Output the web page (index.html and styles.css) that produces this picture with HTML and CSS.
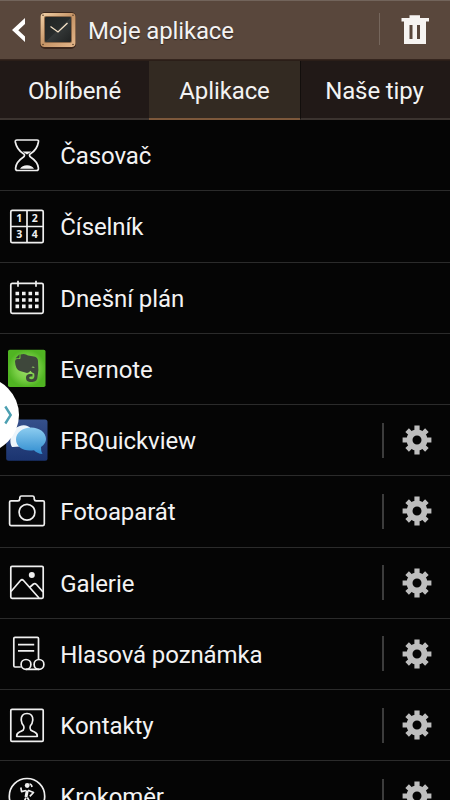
FILE: index.html
```
<!DOCTYPE html>
<html lang="cs">
<head>
<meta charset="utf-8">
<title>Moje aplikace</title>
<link rel="stylesheet" href="styles.css">
</head>
<body>
<svg class="defs" width="0" height="0" aria-hidden="true">
  <defs>
    <linearGradient id="gold" x1="0" y1="0" x2="1" y2="1"><stop offset="0" stop-color="#f1d1a8"/><stop offset=".5" stop-color="#c59466"/><stop offset="1" stop-color="#e5b78b"/></linearGradient>
    <linearGradient id="face" x1="0" y1="0" x2="1" y2="1"><stop offset="0" stop-color="#202424"/><stop offset=".5" stop-color="#282c2c"/><stop offset=".52" stop-color="#353939"/><stop offset="1" stop-color="#202222"/></linearGradient>
    <radialGradient id="green"><stop offset="0" stop-color="#a5df70"/><stop offset=".6" stop-color="#78ce45"/><stop offset="1" stop-color="#50b422"/></radialGradient>
    <linearGradient id="navy" x1="0" y1="0" x2="0" y2="1"><stop offset="0" stop-color="#35508b"/><stop offset="1" stop-color="#1b3470"/></linearGradient>
    <linearGradient id="bubble" x1="0" y1="0" x2="0" y2="1"><stop offset="0" stop-color="#8dcdf0"/><stop offset="1" stop-color="#318dd0"/></linearGradient>
    <symbol id="gear" viewBox="-15 -15 30 30">
      <circle r="7.5" fill="none" stroke="#bebebe" stroke-width="6"/>
      <g fill="#bebebe">
        <path id="teeth" d="M-2.6-14.4H2.6V-9H-2.6ZM-2.6 9H2.6V14.4H-2.6ZM-14.4-2.6V2.6H-9V-2.6ZM9-2.6V2.6H14.4V-2.6Z"/>
        <use href="#teeth" transform="rotate(45) scale(.97)"/>
      </g>
    </symbol>
  </defs>
</svg>
<div class="screen">
  <header class="bar">
    <svg class="bar-icons" viewBox="0 0 88 60">
      <path d="M25 18V24L18.3 30.3 25 36.5V42L12 30Z" fill="#fff"/>
      <rect x="40" y="12" width="36" height="37" rx="5" fill="#3c271c"/>
      <rect x="40.5" y="13" width="35" height="34" rx="4" fill="url(#gold)"/>
      <rect x="44" y="16" width="28" height="27" rx="2" fill="#8b6849"/>
      <rect x="45" y="17" width="26" height="25" rx="1" fill="url(#face)"/>
      <path d="M50.5 26.5L58 32 67.5 23" fill="none" stroke="#f5e2c7" stroke-width="1.3"/>
      <g fill="#59402b"><circle cx="43" cy="15.3" r=".8"/><circle cx="73" cy="15.3" r=".8"/><circle cx="43" cy="44.5" r=".8"/><circle cx="73" cy="44.5" r=".8"/></g>
    </svg>
    <h1>Moje aplikace</h1>
    <svg class="trash" viewBox="0 0 70 60">
      <path d="M21.5 18H29.5V15.3H40V18H49V21.5H46V44H24V21.5H21.5Z" fill="#f6f4f2"/>
      <path d="M29.5 25H32.5V39H29.5ZM37 25H40V39H37Z" fill="#59473c"/>
    </svg>
  </header>
  <nav class="tabs">
    <div class="tab">Oblíbené</div>
    <div class="tab active">Aplikace</div>
    <div class="tab last">Naše tipy</div>
  </nav>
  <main class="list">
    <div class="row"><svg class="icon" viewBox="0 0 54 71">
      <path d="M17 20H37Q39 20 38.4 22C37.5 28 35 31 30.5 33.7Q28.5 35.3 30.5 37C35 40 38 43 38.4 48Q38.6 50.5 36.5 50.5H17.5Q15.4 50.5 15.6 48C16 43 19 40 23.5 37Q25.5 35.3 23.5 33.7C19 31 16.5 28 15.3 22Q15 20 17 20Z"/>
      <path class="solid" d="M22.5 31.5H31.5L27 34.5ZM20 48.8Q22 45.3 27 45.3T34 48.8Z"/>
    </svg><span class="name">Časovač</span></div>
    <div class="row"><svg class="icon" viewBox="0 0 54 71">
      <rect x="10.8" y="19.3" width="32.4" height="32.4" rx="1.5"/><path d="M27 19V52M11 35.5H43"/>
      <g class="digits"><text x="19.2" y="31.3">1</text><text x="34.8" y="31.3">2</text><text x="19.2" y="47">3</text><text x="34.8" y="47">4</text></g>
    </svg><span class="name">Číselník</span></div>
    <div class="row"><svg class="icon" viewBox="0 0 54 71">
      <rect x="10.8" y="21.3" width="32.4" height="30" rx="1.5"/><path d="M18 18.7V24.8M36 18.7V24.8"/>
      <path class="dots" d="M15.5 31.5H39M15.5 38H39M15.5 44.4H39"/>
    </svg><span class="name">Dnešní plán</span></div>
    <div class="row"><svg class="icon" viewBox="0 0 54 71">
      <rect class="fill" x="8" y="16.8" width="37.5" height="37.2" rx="1.8" fill="url(#green)"/>
      <path class="fill" fill="#3e473b" d="M20.5 21.5Q25 20 28 22.5L34 23.5Q37.8 24 38 28Q39 37 37.5 44C37 48.5 34 49.2 30 49Q25.8 48.5 26 44.5Q26 41 30 41H32.5V43.5H30.8Q28.8 43.6 29.2 45.2Q30 46.6 32 46.2C34.8 45.7 34.6 43 34.2 40.5Q32 40 30.3 37.8Q29.3 40.3 26 39.8L20 38Q15.5 37 15 28.5Q15 26 17 26H19.5Q20.5 25.8 20.5 25Z"/>
      <path class="fill" fill="#3e473b" d="M15.5 25.2L19.5 21.3V24.3Q19.5 25.2 18.6 25.2Z"/>
      <path class="fill" fill="#99dc68" d="M31.5 34.6Q33.2 32 34.8 35Q33 34 31.5 34.6Z"/>
    </svg><span class="name">Evernote</span></div>
    <div class="row"><svg class="icon" viewBox="0 0 54 71">
      <rect class="fill" x="6.2" y="14.5" width="41.3" height="41.2" rx="2.5" fill="url(#navy)"/>
      <path class="fill" fill="#edf5fb" d="M12 42C9 38 10 28 15 24C20 19 28 19 31 24L32 37 20 41.5 13 42Z"/>
      <path class="fill" fill="url(#bubble)" d="M31 22.5C39.5 22.5 46 27.5 46 34Q46 38.5 41 42Q40.7 45.5 42.5 49Q37 48.5 34 45.2C24 47 16 42 16 34.5C16 27.5 22.5 22.5 31 22.5Z"/>
    </svg><span class="name">FBQuickview</span><span class="settings"><svg viewBox="-15 -15 30 30"><use href="#gear" x="-15" y="-15" width="30" height="30"/></svg></span></div>
    <div class="row"><svg class="icon" viewBox="0 0 54 71">
      <path d="M11 24.8H18Q19.5 24.8 19.8 23V21.5Q20 20 21.5 20H32.5Q34 20 34.2 21.5V23Q34.5 24.8 36 24.8H43Q44.3 24.8 44.3 26V48Q44.3 49.6 43 49.6H11Q9.6 49.6 9.6 48V26Q9.6 24.8 11 24.8Z"/><circle cx="27" cy="36.3" r="7.9"/>
    </svg><span class="name">Fotoaparát</span><span class="settings"><svg viewBox="-15 -15 30 30"><use href="#gear" x="-15" y="-15" width="30" height="30"/></svg></span></div>
    <div class="row"><svg class="icon" viewBox="0 0 54 71">
      <rect x="10.8" y="19.3" width="32.4" height="32" rx="1.2"/><path d="M11 44.5L20.5 33.5Q22 32 23.5 33.5L39 51M29.5 40.5L33.5 37Q35 36 36.5 37.5L43 45"/><circle class="solid" cx="31.8" cy="28" r="3"/>
    </svg><span class="name">Galerie</span><span class="settings"><svg viewBox="-15 -15 30 30"><use href="#gear" x="-15" y="-15" width="30" height="30"/></svg></span></div>
    <div class="row"><svg class="icon" viewBox="0 0 54 71">
      <path d="M20.8 49H15Q13.8 49 13.8 47.8V20.5Q13.8 19.3 15 19.3H37.3Q38.5 19.3 38.5 20.5V41M18 26.6H34.2M18 32.8H34.2M26 51.3H39"/><circle cx="26" cy="46.4" r="4.9"/><circle cx="39" cy="46.4" r="4.9"/>
    </svg><span class="name">Hlasová poznámka</span><span class="settings"><svg viewBox="-15 -15 30 30"><use href="#gear" x="-15" y="-15" width="30" height="30"/></svg></span></div>
    <div class="row"><svg class="icon" viewBox="0 0 54 71">
      <rect x="10.8" y="19.4" width="32.4" height="32" rx="1.2"/>
      <path d="M27 23.5C31 23.5 33 26 32.8 30Q32.5 33.7 30.3 36Q29.5 38.5 30.7 40Q32 41 34.5 42Q37.5 43.3 37.3 46.5H16.7Q16.5 43.3 19.5 42Q22 41 23.3 40Q24.5 38.5 23.7 36Q21.5 33.7 21.2 30C21 26 23 23.5 27 23.5Z"/>
    </svg><span class="name">Kontakty</span><span class="settings"><svg viewBox="-15 -15 30 30"><use href="#gear" x="-15" y="-15" width="30" height="30"/></svg></span></div>
    <div class="row"><svg class="icon" viewBox="0 0 54 71">
      <circle cx="27" cy="35.2" r="17.7"/><circle class="solid" cx="27.2" cy="24.5" r="2.4"/>
      <path d="M29.5 23Q31.5 23 32 26M26 29.5L21.6 30.6 20.8 26.5M28 29.2L33.5 31.5 29.8 35.3"/><path stroke-width="3" d="M27.3 29.5L26 36"/><path d="M26 36.5L23 43M27.3 36.5L30 41V46"/>
    </svg><span class="name">Krokoměr</span><span class="settings"><svg viewBox="-15 -15 30 30"><use href="#gear" x="-15" y="-15" width="30" height="30"/></svg></span></div>
  </main>
  <svg class="handle" viewBox="0 0 20 68"><circle cx="-19" cy="34" r="38" fill="#fff"/><path d="M5.3 25.5L10.7 34 5.3 42.5" fill="none" stroke="#4b9fb1" stroke-width="2.4"/></svg>
</div>
</body>
</html>
```
FILE: styles.css
```
* { box-sizing: border-box; }
body { margin: 0; background: #050505; }
.defs { position: absolute; }
.screen {
  position: relative;
  width: 450px;
  height: 800px;
  overflow: hidden;
  background: #050505;
  color: #f3f3f3;
  font-family: Roboto, sans-serif;
  font-size: 24px;
  letter-spacing: -0.1px;
}
.bar {
  display: flex;
  height: 60px;
  background: #59473c;
  border-top: 1px solid #72645b;
  border-bottom: 1px solid #35251e;
}
.bar-icons { width: 88px; height: 60px; flex: none; margin-top: -1px; }
h1 {
  flex: 1;
  margin: 0;
  font-size: 24px;
  font-weight: 400;
  line-height: 60px;
  letter-spacing: -0.15px;
  text-shadow: 0 1px 1px #30241e;
}
.trash {
  width: 70px;
  height: 60px;
  flex: none;
  margin-top: -1px;
  margin-left: -1px;
  margin-right: 1px;
  background: linear-gradient(#75665c, #75665c) 0 13px / 1px 32px no-repeat;
}
.trash path { transform: translateX(1px); }
.tabs {
  display: grid;
  grid-template-columns: 149px 151px 150px;
  height: 60px;
  border-top: 1px solid #2b1e18;
}
.tab {
  background: #211917;
  border-bottom: 2px solid #3b332f;
  text-align: center;
  line-height: 61px;
  height: 59px;
}
.tab.active { background: #332a22; border-bottom-color: #7d583b; }
.tab.last { border-left: 1px solid #120e0c; padding-right: 2px; }
.row {
  display: flex;
  align-items: center;
  height: 71.25px;
  border-bottom: 1px solid #2b2b2b;
}
.icon {
  width: 54px;
  height: 71px;
  flex: none;
  fill: none;
  stroke: #f0f0f0;
  stroke-width: 1.7;
  stroke-linejoin: round;
}
.icon .solid { fill: #f0f0f0; stroke: none; }
.icon .fill { stroke: none; }
.icon .dots { stroke-width: 3.6; stroke-dasharray: 3.6 2.9; }
.digits { fill: #f0f0f0; stroke: none; font: 700 10.5px "Open Sans", sans-serif; text-anchor: middle; }
.name { flex: 1; margin-left: 6.3px; line-height: 30px; padding-top: 2px; white-space: nowrap; }
.settings {
  display: flex;
  align-items: center;
  justify-content: center;
  width: 68px;
  height: 35px;
  border-left: 2px solid #3c3c3c;
}
.settings svg { width: 30px; height: 30px; margin-right: 1px; }
.handle { position: absolute; left: 0; top: 381px; width: 20px; height: 68px; }
```
